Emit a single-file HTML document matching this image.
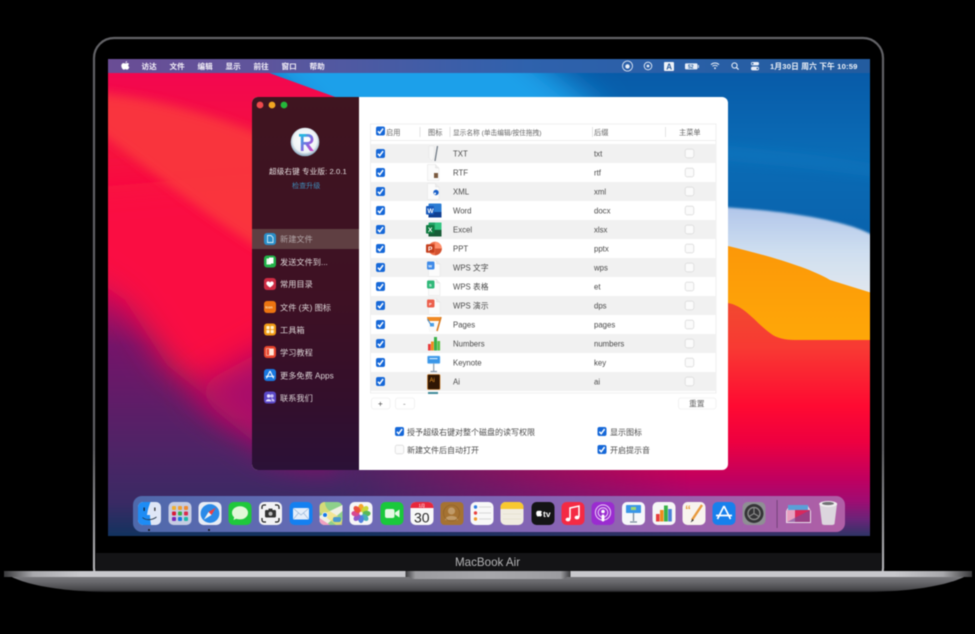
<!DOCTYPE html>
<html><head><meta charset="utf-8"><title>MacBook Air</title>
<style>
html,body{margin:0;padding:0;background:#000;width:975px;height:634px;overflow:hidden}
svg{display:block;filter:blur(.4px)}
text{font-family:"Liberation Sans","Noto Sans CJK SC",sans-serif}
.m{font-size:7.6px;fill:#f4f0f8;font-weight:700}
.s{font-size:8.2px;fill:#dcd4d6}
.h{font-size:7.2px;fill:#666}
.r{font-size:7.8px;fill:#4a4a4a}
.b{font-size:8px;fill:#4c4c4c}
</style></head><body>
<svg width="975" height="634" viewBox="0 0 975 634" xmlns="http://www.w3.org/2000/svg">
<defs>
<linearGradient id="gL" gradientUnits="userSpaceOnUse" x1="0" y1="59" x2="0" y2="536">
<stop offset="0" stop-color="#f20552"/><stop offset=".2" stop-color="#f6123f"/><stop offset=".38" stop-color="#f80a40"/><stop offset=".48" stop-color="#c80a5a"/><stop offset=".6" stop-color="#74146a"/><stop offset=".82" stop-color="#4e2466"/><stop offset=".93" stop-color="#3a2a64"/><stop offset="1" stop-color="#12335f"/>
</linearGradient>
<linearGradient id="gBlue" x1="0" y1="0" x2="0" y2="1">
<stop offset="0" stop-color="#0758a6"/><stop offset=".45" stop-color="#0b6cb6"/><stop offset=".7" stop-color="#0a66b0"/><stop offset="1" stop-color="#0860aa"/>
</linearGradient>
<linearGradient id="gWhite" x1="0" y1="0" x2="0" y2="1">
<stop offset="0" stop-color="#a9bfe8"/><stop offset=".55" stop-color="#cfdff0"/><stop offset="1" stop-color="#e4e8ee"/>
</linearGradient>
<linearGradient id="gOr" x1="0" y1="0" x2="0" y2="1">
<stop offset="0" stop-color="#fb9208"/><stop offset="1" stop-color="#ffa908"/>
</linearGradient>
<linearGradient id="gRed" gradientUnits="userSpaceOnUse" x1="0" y1="300" x2="0" y2="536">
<stop offset="0" stop-color="#f14a30"/><stop offset=".2" stop-color="#f83a33"/><stop offset=".45" stop-color="#ff0a32"/><stop offset=".6" stop-color="#ee0040"/><stop offset=".76" stop-color="#c00060"/><stop offset=".85" stop-color="#a00c72"/><stop offset=".93" stop-color="#6a2478"/><stop offset="1" stop-color="#2e3465"/>
</linearGradient>
<linearGradient id="gFade" gradientUnits="userSpaceOnUse" x1="340" y1="0" x2="690" y2="0">
<stop offset="0" stop-color="#fff"/><stop offset="1" stop-color="#000"/>
</linearGradient>
<mask id="mFade" maskUnits="userSpaceOnUse" x="0" y="0" width="975" height="634"><rect x="0" y="0" width="975" height="634" fill="url(#gFade)"/></mask>
<linearGradient id="gDock" x1="0" y1="0" x2="1" y2="0">
<stop offset="0" stop-color="#4f69ab"/><stop offset=".3" stop-color="#6a6bb6"/><stop offset=".6" stop-color="#8864b4"/><stop offset="1" stop-color="#b05fa6"/>
</linearGradient>
<linearGradient id="gMenu" x1="0" y1="0" x2="1" y2="0">
<stop offset="0" stop-color="#6a4d95"/><stop offset=".2" stop-color="#5f559c"/><stop offset=".55" stop-color="#2f62ad"/><stop offset="1" stop-color="#235c9f"/>
</linearGradient>
<linearGradient id="gSide" x1="0" y1="0" x2="0" y2="1">
<stop offset="0" stop-color="#3f1520"/><stop offset=".55" stop-color="#3e1124"/><stop offset=".8" stop-color="#340f2b"/><stop offset="1" stop-color="#2b1137"/>
</linearGradient>
<linearGradient id="gBase" x1="0" y1="0" x2="0" y2="1">
<stop offset="0" stop-color="#8c8c90"/><stop offset=".55" stop-color="#66666a"/><stop offset=".9" stop-color="#454548"/><stop offset="1" stop-color="#1c1c1e"/>
</linearGradient>
<linearGradient id="gStrip" x1="0" y1="0" x2="1" y2="0">
<stop offset="0" stop-color="#3a3a3c"/><stop offset=".03" stop-color="#a8a8ac"/><stop offset=".08" stop-color="#c8c8cc"/><stop offset=".92" stop-color="#c8c8cc"/><stop offset=".97" stop-color="#a8a8ac"/><stop offset="1" stop-color="#3a3a3c"/>
</linearGradient>
<linearGradient id="gNotch" x1="0" y1="0" x2="1" y2="0">
<stop offset="0" stop-color="#3c3c3e"/><stop offset=".06" stop-color="#9c9ca0"/><stop offset=".5" stop-color="#a8a8ac"/><stop offset=".94" stop-color="#9c9ca0"/><stop offset="1" stop-color="#3c3c3e"/>
</linearGradient>
<linearGradient id="gBez" x1="0" y1="0" x2="0" y2="1">
<stop offset="0" stop-color="#626266"/><stop offset=".75" stop-color="#626266"/><stop offset="1" stop-color="#c0c0c4"/>
</linearGradient>
<radialGradient id="gLogo" cx=".5" cy=".45" r=".55"><stop offset="0" stop-color="#fff"/><stop offset=".75" stop-color="#eef3f6"/><stop offset="1" stop-color="#7fa0b8"/></radialGradient>
<linearGradient id="gR" x1="0" y1="0" x2="1" y2="1"><stop offset="0" stop-color="#28b5e0"/><stop offset=".55" stop-color="#8068e0"/><stop offset="1" stop-color="#d840c0"/></linearGradient>
<filter id="b1" filterUnits="userSpaceOnUse" x="0" y="0" width="975" height="634"><feGaussianBlur stdDeviation="1"/></filter>
<filter id="b4" filterUnits="userSpaceOnUse" x="0" y="0" width="975" height="634"><feGaussianBlur stdDeviation="5"/></filter>
<filter id="b15" filterUnits="userSpaceOnUse" x="0" y="0" width="975" height="634"><feGaussianBlur stdDeviation="16"/></filter>
<clipPath id="scr"><rect x="108" y="59" width="762" height="477"/></clipPath>
<g id="on"><rect x="-4.5" y="-4.5" width="9" height="9" rx="2" fill="#1668d8"/><path d="M-2.6,.2 L-.8,2.2 L2.6,-2.4" fill="none" stroke="#fff" stroke-width="1.5"/></g>
<g id="off"><rect x="-4.3" y="-4.3" width="8.6" height="8.6" rx="2" fill="#fbfbfb" stroke="#dcdcdc" stroke-width=".8"/></g>
<g id="doc"><path d="M-5.5,-8 H2.5 L6,-4.5 V8 H-5.5 Z" fill="#fbfbfb" stroke="#e2e2e2" stroke-width=".5"/><path d="M2.5,-8 V-4.5 H6" fill="#ececec" stroke="#dadada" stroke-width=".4"/></g>
</defs>

<!-- laptop lid -->
<rect x="94" y="38" width="789" height="550" rx="20" fill="#000" stroke="url(#gBez)" stroke-width="2.2"/>
<rect x="96" y="553" width="785" height="18" fill="#141416"/>

<!-- wallpaper -->
<g clip-path="url(#scr)">
<rect x="108" y="59" width="762" height="477" fill="#0860aa"/>
<rect x="440" y="59" width="430" height="210" fill="url(#gBlue)"/>
<path d="M220,30 L500,30 L600,110 L600,200 L400,200 Z" fill="#1aa0ea" filter="url(#b15)"/>
<path d="M620,135 C700,145 800,150 880,165 L880,178 C800,165 700,160 620,150 Z" fill="#1078c0" opacity=".5" filter="url(#b4)"/>
<path d="M500,195 C600,198 728,207 760,210 C800,214 850,222 872,235 L872,300 L500,300 Z" fill="url(#gWhite)" filter="url(#b1)"/>
<path d="M500,210 C600,225 700,240 728,246 C770,256 810,268 830,280 L872,293 L872,350 L500,350 Z" fill="url(#gOr)"/>
<path d="M100,300 L728,303 C745,306 755,322 770,333 C776,338 785,340 795,340 L872,340 L872,540 L100,540 Z" fill="url(#gRed)"/>
<g mask="url(#mFade)">
<path d="M231,59 L371,110 L700,110 L700,540 L100,540 L100,59 Z" fill="url(#gL)"/>
</g>
<g clip-path="url(#scr)">
<path d="M60,190 L300,170 L320,430 L233,418 L167,365 L125,300 L60,255 Z" fill="#fa0a42" filter="url(#b15)"/>
<path d="M190,390 L300,330 L340,470 L270,455 Z" fill="#a8086a" filter="url(#b15)"/>
<path d="M90,92 C150,97 205,112 262,135 L262,250 C205,215 150,170 90,125 Z" fill="#fa3a3c" opacity=".85" filter="url(#b4)"/>
</g>
</g>

<!-- menubar -->
<rect x="108" y="59" width="762" height="14" fill="url(#gMenu)"/>
<g transform="translate(125.2,65.5) scale(1.25) translate(-125.3,-65)">
<path d="M125.4,62.8 C125.6,62 126.2,61.6 126.8,61.5 C126.9,62.3 126.2,63 125.4,62.8 Z M125.3,63.4 C126,63.4 126.3,63 127,63 C127.6,63 128.1,63.3 128.4,63.8 C127.4,64.4 127.6,65.9 128.6,66.3 C128.3,67.2 127.6,68.3 126.9,68.3 C126.3,68.3 126.1,68 125.5,68 C124.9,68 124.7,68.3 124.1,68.3 C123.2,68.3 122.2,66.5 122.2,65.2 C122.2,63.9 123.1,63.1 124,63.1 C124.6,63.1 124.9,63.4 125.3,63.4 Z" fill="#fff"/>
</g>
<text class="m" x="141.5" y="69">访达</text><text class="m" x="169.5" y="69">文件</text><text class="m" x="197.5" y="69">编辑</text><text class="m" x="225.5" y="69">显示</text><text class="m" x="253.5" y="69">前往</text><text class="m" x="281.5" y="69">窗口</text><text class="m" x="309.5" y="69">帮助</text>
<g fill="none" stroke="#e8eef8">
<circle cx="627.5" cy="66" r="5" stroke-width=".8"/><circle cx="627.5" cy="66.4" r="2.2" fill="#e8eef8" stroke="none"/>
<circle cx="648" cy="66" r="3.8" stroke-width=".9"/><circle cx="648" cy="66" r="1.4" fill="#e8eef8" stroke="none"/>
<path d="M711,64.6 C713.2,62.5 716.8,62.5 719,64.6 M712.5,66.3 C714,65 716,65 717.5,66.3" stroke-width="1"/>
<circle cx="734.5" cy="65.5" r="2.6" stroke-width="1"/><path d="M736.4,67.4 L738.6,69.6" stroke-width="1.2"/>
</g>
<circle cx="715" cy="68.2" r=".9" fill="#e8eef8"/>
<rect x="664" y="62" width="10" height="9" rx="1" fill="#eef2f8"/><text x="666.2" y="69.6" style="font-size:8px;font-weight:700;fill:#2b5c9c">A</text>
<rect x="685" y="63.4" width="12.5" height="6" rx="1" fill="#e8eef8"/><rect x="698" y="65" width="1" height="3" fill="#c8d4e6"/><text x="688" y="68.6" style="font-size:5px;font-weight:700;fill:#1f5a9c">52</text>
<rect x="751" y="62" width="8" height="3.4" rx="1.6" fill="#e8eef8"/><rect x="751" y="66.6" width="8" height="3.8" rx="1.8" fill="#e8eef8"/><circle cx="752.6" cy="63.7" r=".9" fill="#235c9f"/><circle cx="757.4" cy="68.5" r=".9" fill="#235c9f"/>
<text x="770" y="69" style="font-size:7.7px;font-weight:700;fill:#eef2f8;letter-spacing:.15px">1月30日 周六 下午 10:59</text>

<!-- window -->
<rect x="252" y="97" width="476" height="373" rx="6" fill="#fff"/>
<path d="M359,97 H258 a6,6 0 0 0 -6,6 V464 a6,6 0 0 0 6,6 H359 Z" fill="url(#gSide)"/>
<circle cx="260" cy="105" r="3.4" fill="#ee4a4c"/><circle cx="272" cy="105" r="3.4" fill="#f2a622"/><circle cx="284" cy="105" r="3.4" fill="#25b83a"/>
<circle cx="305" cy="142" r="14.3" fill="url(#gLogo)"/>
<path d="M301,134 H307.6 C312,134 313.4,137 313.4,139.4 C313.4,142 311.6,144 309,144.4 L313.8,151 H310 L305.5,144.6 H303.6 V151 H300.8 V136.6 H301 Z M303.6,136.8 V142 H307.4 C309.4,142 310.6,141 310.6,139.4 C310.6,137.8 309.4,136.8 307.4,136.8 Z" fill="url(#gR)"/>
<rect x="299" y="134" width="7" height="2.6" fill="#28b5e0"/>
<text x="269" y="174" style="font-size:7.6px;fill:#e6dfe0;letter-spacing:.1px">超级右键 专业版: 2.0.1</text>
<text x="292" y="188" style="font-size:7.1px;fill:#3f8cb8">检查升级</text>

<rect x="252" y="229" width="107" height="20" fill="#5f3f42"/>
<!-- sidebar icons -->
<rect x="264" y="233" width="12" height="12" rx="3" fill="#2a8ec8"/><path d="M267.5,235.5 H271 L273,237.5 V242.5 H267.5 Z" fill="none" stroke="#d5eef8" stroke-width=".9"/>
<rect x="264" y="255.5" width="12" height="12" rx="3" fill="#23b24a"/><path d="M266.5,258.5 H271 V264.5 H266.5 Z" fill="#e8f8e8"/><path d="M269,257.5 H273.5 V263.5 H269 Z" fill="#fff"/>
<rect x="264" y="278" width="12" height="12" rx="3" fill="#cf2c44"/><path d="M270,287.5 C266.5,285 265.8,283.5 266.6,282.2 C267.5,281 269.2,281.2 270,282.6 C270.8,281.2 272.5,281 273.4,282.2 C274.2,283.5 273.5,285 270,287.5 Z" fill="#fff"/>
<rect x="264" y="301" width="12" height="12" rx="3" fill="#ec7410"/><text x="265.3" y="308.5" style="font-size:3.6px;font-weight:700;fill:#ffe9c8">Icon</text>
<rect x="264" y="323.5" width="12" height="12" rx="3" fill="#f09a14"/><g fill="#fff2cc"><rect x="266.4" y="326" width="3.2" height="3.2" rx=".7"/><rect x="270.6" y="326" width="3.2" height="3.2" rx=".7"/><rect x="266.4" y="330" width="3.2" height="3.2" rx=".7"/><rect x="270.6" y="330" width="3.2" height="3.2" rx=".7"/></g>
<rect x="264" y="346" width="12" height="12" rx="3" fill="#e8442c"/><rect x="266.4" y="348.6" width="7.4" height="6.8" fill="#ffe8d8"/><rect x="266.4" y="348.6" width="3" height="6.8" fill="#e8442c" stroke="#ffe8d8" stroke-width=".5"/>
<rect x="264" y="369" width="12" height="12" rx="3" fill="#1878e0"/><path d="M270,371 L273.6,378.4 M270,371 L266.4,378.4 M265.8,376.4 H274.2" stroke="#fff" stroke-width="1" fill="none"/>
<rect x="264" y="391.5" width="12" height="12" rx="3" fill="#5a48c8"/><circle cx="268.6" cy="396" r="1.7" fill="#e6e0ff"/><circle cx="272" cy="396" r="1.7" fill="#c8c0f4"/><path d="M265.8,401.4 C266,398.4 271,398.4 271.4,401.4 Z" fill="#e6e0ff"/><path d="M271.8,401.4 C272,400 271.6,399 271,398.6 C273,398.2 274.6,399.6 274.6,401.4 Z" fill="#c8c0f4"/>

<text x="280" y="242" class="s" style="fill:#b0a4a6">新建文件</text>
<text x="280" y="265" class="s">发送文件到...</text>
<text x="280" y="287" class="s">常用目录</text>
<text x="280" y="310.5" class="s">文件 (夹) 图标</text>
<text x="280" y="333" class="s">工具箱</text>
<text x="280" y="355.5" class="s">学习教程</text>
<text x="280" y="378.5" class="s">更多免费 Apps</text>
<text x="280" y="401" class="s">联系我们</text>

<!-- table -->
<rect x="370.5" y="124" width="345.5" height="269" fill="#fff" stroke="#ececec" stroke-width=".8"/>
<rect x="371" y="140" width="345" height="1" fill="#eeeeee"/>
<g fill="#f1f1f1">
<rect x="371" y="144" width="345" height="19"/><rect x="371" y="182" width="345" height="19"/><rect x="371" y="220" width="345" height="19"/><rect x="371" y="258" width="345" height="19"/><rect x="371" y="296" width="345" height="19"/><rect x="371" y="334" width="345" height="19"/><rect x="371" y="372" width="345" height="19"/>
</g>
<g stroke="#dedede" stroke-width=".8"><path d="M420,127 V137 M450,127 V137 M592.5,127 V137 M665.5,127 V137"/></g>
<use href="#on" x="380.5" y="131"/>
<text class="h" x="386" y="135">启用</text><text class="h" x="428" y="135">图标</text><text class="h" x="453" y="135" style="font-size:6.7px">显示名称 (单击编辑/按住拖拽)</text><text class="h" x="594" y="135">后缀</text><text class="h" x="679" y="135">主菜单</text>

<use href="#on" x="380.5" y="153.5"/><use href="#on" x="380.5" y="172.5"/><use href="#on" x="380.5" y="191.5"/><use href="#on" x="380.5" y="210.5"/><use href="#on" x="380.5" y="229.5"/><use href="#on" x="380.5" y="248.5"/><use href="#on" x="380.5" y="267.5"/><use href="#on" x="380.5" y="286.5"/><use href="#on" x="380.5" y="305.5"/><use href="#on" x="380.5" y="324.5"/><use href="#on" x="380.5" y="343.5"/><use href="#on" x="380.5" y="362.5"/><use href="#on" x="380.5" y="381.5"/>
<use href="#off" x="689.5" y="153.5"/><use href="#off" x="689.5" y="172.5"/><use href="#off" x="689.5" y="191.5"/><use href="#off" x="689.5" y="210.5"/><use href="#off" x="689.5" y="229.5"/><use href="#off" x="689.5" y="248.5"/><use href="#off" x="689.5" y="267.5"/><use href="#off" x="689.5" y="286.5"/><use href="#off" x="689.5" y="305.5"/><use href="#off" x="689.5" y="324.5"/><use href="#off" x="689.5" y="343.5"/><use href="#off" x="689.5" y="362.5"/><use href="#off" x="689.5" y="381.5"/>

<g class="names">
<text class="r" x="453" y="156.5">TXT</text><text class="r" x="453" y="175.5">RTF</text><text class="r" x="453" y="194.5">XML</text><text class="r" x="453" y="213.5">Word</text><text class="r" x="453" y="232.5">Excel</text><text class="r" x="453" y="251.5">PPT</text><text class="r" x="453" y="270.5">WPS 文字</text><text class="r" x="453" y="289.5">WPS 表格</text><text class="r" x="453" y="308.5">WPS 演示</text><text class="r" x="453" y="327.5">Pages</text><text class="r" x="453" y="346.5">Numbers</text><text class="r" x="453" y="365.5">Keynote</text><text class="r" x="453" y="384.5">Ai</text>
<text class="r" x="594" y="156.5">txt</text><text class="r" x="594" y="175.5">rtf</text><text class="r" x="594" y="194.5">xml</text><text class="r" x="594" y="213.5">docx</text><text class="r" x="594" y="232.5">xlsx</text><text class="r" x="594" y="251.5">pptx</text><text class="r" x="594" y="270.5">wps</text><text class="r" x="594" y="289.5">et</text><text class="r" x="594" y="308.5">dps</text><text class="r" x="594" y="327.5">pages</text><text class="r" x="594" y="346.5">numbers</text><text class="r" x="594" y="365.5">key</text><text class="r" x="594" y="384.5">ai</text>
</g>

<!-- table icons -->
<path d="M429,146 H434 V158 L431.5,160.5 L429,158 Z" fill="#f6f6f6" stroke="#e4e4e4" stroke-width=".5"/>
<path d="M437.5,146 L435,161" stroke="#6a7480" stroke-width="1.2"/>
<use href="#doc" x="433" y="172.5"/><rect x="434" y="173" width="4" height="5" fill="#7a5a40"/>
<use href="#doc" x="433" y="191.5"/><circle cx="436" cy="192.5" r="2.7" fill="#1a60c8"/><circle cx="435" cy="193.5" r="1" fill="#fff"/>
<!-- word -->
<rect x="428.5" y="203.5" width="13" height="14" rx="1" fill="#2b7cd3"/><rect x="428.5" y="212" width="13" height="5.5" fill="#103f91"/><rect x="426" y="206" width="8" height="8.6" rx="1" fill="#185abd"/><text x="427.4" y="213" style="font-size:6.6px;font-weight:700;fill:#fff">W</text>
<!-- excel -->
<rect x="428.5" y="222.5" width="13" height="14" rx="1" fill="#21a366"/><rect x="435" y="222.5" width="6.5" height="7" fill="#33c481"/><rect x="428.5" y="230" width="13" height="6.5" fill="#185c37"/><rect x="426" y="225" width="8.4" height="8.6" rx="1" fill="#107c41"/><text x="428" y="232" style="font-size:6.6px;font-weight:700;fill:#fff">X</text>
<!-- ppt -->
<circle cx="435" cy="248.5" r="6.8" fill="#ed6c47"/><path d="M435,241.7 A6.8,6.8 0 0 1 441.8,248.5 H435 Z" fill="#ff8f6b"/><path d="M435,248.5 H441.8 A6.8,6.8 0 0 1 435,255.3 Z" fill="#d35230"/><rect x="426" y="244.2" width="8.4" height="8.6" rx="1" fill="#c43e1c"/><text x="428" y="251.2" style="font-size:6.6px;font-weight:700;fill:#fff">P</text>
<!-- WPS -->
<use href="#doc" x="434" y="268.5"/><rect x="427" y="261.5" width="7.5" height="8" rx="1.2" fill="#3e8ae8"/><text x="428.2" y="267.4" style="font-size:4px;font-weight:700;fill:#fff">W</text>
<use href="#doc" x="434" y="287.5"/><rect x="427" y="280.5" width="7.5" height="8" rx="1.2" fill="#2fb878"/><text x="429" y="286.4" style="font-size:4px;font-weight:700;fill:#fff">S</text>
<use href="#doc" x="434" y="306.5"/><rect x="427" y="299.5" width="7.5" height="8" rx="1.2" fill="#ec5f4c"/><text x="429" y="305.4" style="font-size:4px;font-weight:700;fill:#fff">P</text>
<!-- Pages -->
<path d="M427,317 H440 L438,332 H429 Z" fill="#fafafa"/><path d="M427,317 H440 L439.4,321 H427.6 Z" fill="#f08a24"/><rect x="430" y="323" width="4" height="3.5" fill="#4aa0e8"/><path d="M441,317 L437,331" stroke="#d87a20" stroke-width="1.6"/><path d="M427.5,319 L431,325" stroke="#3a8ad0" stroke-width="1"/>
<!-- Numbers -->
<rect x="428" y="344" width="2.8" height="6.5" fill="#e83c3c"/><rect x="431" y="341.5" width="2.8" height="9" fill="#f08a1c"/><rect x="434" y="337" width="3" height="13.5" fill="#38b048"/><rect x="437.3" y="341" width="2.8" height="9.5" fill="#5cc04a"/>
<!-- Keynote -->
<rect x="427.5" y="356" width="12.5" height="7.5" rx=".8" fill="#3a96e8" stroke="#88c4f4" stroke-width=".5"/><rect x="429.5" y="358" width="8" height="1.2" fill="#d0e8fb"/><path d="M433.7,363.5 V371 M430.5,371.5 H437" stroke="#8a9cae" stroke-width="1.2" fill="none"/>
<!-- AI -->
<rect x="427.5" y="374.5" width="12.5" height="15" rx="1" fill="#2f1604" stroke="#d87a14" stroke-width=".6"/><text x="429.5" y="382" style="font-size:6px;fill:#f09a2a">Ai</text>
<rect x="428" y="392" width="10" height="2" fill="#3f8a98"/>

<!-- buttons -->
<g fill="#fff" stroke="#efefef" stroke-width=".8"><rect x="371.5" y="398" width="18.5" height="11" rx="2.5"/><rect x="395.5" y="398" width="19" height="11" rx="2.5"/><rect x="678.5" y="398" width="37.5" height="11" rx="2.5"/></g>
<text x="378" y="406.5" style="font-size:8px;fill:#444">+</text><text x="403" y="406.5" style="font-size:8px;fill:#888">-</text>
<text class="h" x="689" y="406.5" style="font-size:7.8px">重置</text>

<use href="#on" x="399.5" y="431.5"/><use href="#off" x="399.5" y="449.5"/><use href="#on" x="602" y="431.5"/><use href="#on" x="602" y="449.5"/>
<text class="b" x="407" y="435">授予超级右键对整个磁盘的读写权限</text>
<text class="b" x="407" y="453">新建文件后自动打开</text>
<text class="b" x="610" y="435">显示图标</text>
<text class="b" x="610" y="453">开启提示音</text>

<!-- dock -->
<rect x="133" y="496" width="712" height="36" rx="9" fill="url(#gDock)"/>
<circle cx="149" cy="530" r="1" fill="#111"/><circle cx="209" cy="530" r="1" fill="#111"/>
<rect x="776.7" y="500" width=".8" height="28" fill="#6a3a70"/>

<!-- finder -->
<rect x="138" y="502" width="23" height="23" rx="5" fill="#dfe6f6"/><path d="M143,502 H150.5 C148.5,507 147.5,511 147,515 H150 C150,518 150.5,522 151,525 H143 A5,5 0 0 1 138,520 V507 A5,5 0 0 1 143,502 Z" fill="#1e8cf4"/><rect x="143.5" y="507.5" width="1.3" height="3.4" fill="#123"/><rect x="154.2" y="507.5" width="1.3" height="3.4" fill="#333"/><path d="M142.5,517.5 C146,520.5 152,520.5 156.5,517" fill="none" stroke="#234" stroke-width=".8"/>
<!-- launchpad -->
<rect x="168.5" y="502" width="23" height="23" rx="5" fill="#c6cce2"/>
<g>
<rect x="172" y="506" width="4" height="4" rx="1" fill="#f0b030"/><rect x="178" y="506" width="4" height="4" rx="1" fill="#f0a030"/><rect x="184" y="506" width="4" height="4" rx="1" fill="#f08a30"/>
<rect x="172" y="511.5" width="4" height="4" rx="1" fill="#d81c38"/><rect x="178" y="511.5" width="4" height="4" rx="1" fill="#38b048"/><rect x="184" y="511.5" width="4" height="4" rx="1" fill="#d82c4c"/>
<rect x="172" y="517" width="4" height="4" rx="1" fill="#7a28b8"/><rect x="178" y="517" width="4" height="4" rx="1" fill="#1878e0"/><rect x="184" y="517" width="4" height="4" rx="1" fill="#20b8a8"/>
</g>
<!-- safari -->
<rect x="198.5" y="502" width="23" height="23" rx="5" fill="#e8ecf4"/><circle cx="210" cy="513.5" r="9.4" fill="#2a8ae8"/><path d="M216,507.5 L208.5,512 L211.5,515 Z" fill="#f04040"/><path d="M204,519.5 L208.5,512 L211.5,515 Z" fill="#f4f4f4"/>
<!-- messages -->
<rect x="228.5" y="502" width="23" height="23" rx="5" fill="#1fc83c"/><ellipse cx="240" cy="512.8" rx="8" ry="6.6" fill="#e2f8d8"/><path d="M234.5,516 L233.5,520 L238,518 Z" fill="#e2f8d8"/>
<!-- screenshot -->
<rect x="259" y="502" width="23" height="23" rx="5" fill="#f2f2f4"/><path d="M262,509 V507 A2,2 0 0 1 264,505 H266 M275,505 H277 A2,2 0 0 1 279,507 V509 M279,518 V520 A2,2 0 0 1 277,522 H275 M266,522 H264 A2,2 0 0 1 262,520 V518" fill="none" stroke="#222" stroke-width="1.3"/><rect x="265" y="510" width="11" height="7.5" rx="1.2" fill="#333"/><rect x="268.5" y="508.6" width="4" height="2" fill="#333"/><circle cx="270.5" cy="513.7" r="2" fill="#bbb"/>
<!-- mail -->
<rect x="289.5" y="502" width="23" height="23" rx="5" fill="#1480f0"/><rect x="293" y="508" width="16" height="11.5" rx="1" fill="#e4eefa"/><path d="M293.5,508.5 L301,515 L308.5,508.5 M293.5,519 L298.5,513 M308.5,519 L303.5,513" fill="none" stroke="#9ab8d8" stroke-width=".7"/>
<!-- maps -->
<rect x="319.5" y="502" width="23" height="23" rx="5" fill="#8ed08a"/><path d="M319.5,516 L342.5,505 V511 L326,525 H324.5 A5,5 0 0 1 319.5,520 Z" fill="#f0f0e4"/><path d="M325,502 C325,512 335,512 342,520 V525 H336 C328,518 322,515 319.5,512 V507 A5,5 0 0 1 325,502 Z" fill="#f4e070" opacity=".7"/><path d="M319.5,518 L330,525 H324.5 A5,5 0 0 1 319.5,520 Z" fill="#f0a0c0"/><circle cx="325" cy="515" r="2.4" fill="#1878e8" stroke="#fff" stroke-width=".7"/><rect x="333" y="517" width="8" height="5" rx="2" fill="#4a9ad0"/>
<!-- photos -->
<rect x="349.5" y="502" width="23" height="23" rx="5" fill="#f6f6f6"/>
<g transform="translate(361,513.5)">
<ellipse cx="0" cy="-5.6" rx="2.8" ry="4" fill="#f4a82c"/><ellipse cx="4" cy="-4" rx="2.8" ry="4" fill="#c8d83c" transform="rotate(45 4 -4)"/><ellipse cx="5.6" cy="0" rx="4" ry="2.8" fill="#58b858"/><ellipse cx="4" cy="4" rx="2.8" ry="4" fill="#48b0b8" transform="rotate(-45 4 4)"/><ellipse cx="0" cy="5.6" rx="2.8" ry="4" fill="#5080e0"/><ellipse cx="-4" cy="4" rx="2.8" ry="4" fill="#9058c8" transform="rotate(45 -4 4)"/><ellipse cx="-5.6" cy="0" rx="4" ry="2.8" fill="#d84890"/><ellipse cx="-4" cy="-4" rx="2.8" ry="4" fill="#ec5040" transform="rotate(-45 -4 -4)"/>
</g>
<!-- facetime -->
<rect x="380.5" y="502" width="23" height="23" rx="5" fill="#1ac83c"/><rect x="385" y="509" width="9.5" height="9" rx="2" fill="#e4f8e4"/><path d="M395,512.5 L399.5,509.5 V517.5 L395,514.5 Z" fill="#e4f8e4"/>
<!-- calendar -->
<rect x="410.5" y="502" width="23" height="23" rx="5" fill="#f8f8f8"/><path d="M415.5,502 H428.5 A5,5 0 0 1 433.5,507 V508 H410.5 V507 A5,5 0 0 1 415.5,502 Z" fill="#e8283c"/><text x="418.6" y="506.8" style="font-size:4.2px;fill:#fff">1月</text><text x="414" y="522.5" style="font-size:14px;fill:#2a2a2a">30</text>
<!-- contacts -->
<rect x="440.5" y="502" width="23" height="23" rx="4" fill="#a57232"/><circle cx="451.5" cy="511" r="3.6" fill="#c09a68"/><path d="M445,520 C445.5,514.5 457.5,514.5 458,520 Z" fill="#c09a68"/><circle cx="451.5" cy="513" r="8" fill="none" stroke="#8a5e28" stroke-width=".6"/>
<!-- reminders -->
<rect x="470.5" y="502" width="23" height="23" rx="5" fill="#f8f8f8"/><circle cx="475.5" cy="507" r="1.7" fill="#2a7ae0"/><circle cx="475.5" cy="513" r="1.7" fill="#e84040"/><circle cx="475.5" cy="519" r="1.7" fill="#f09a2c"/><path d="M479,507 H491 M479,513 H491 M479,519 H491" stroke="#ccc" stroke-width=".7"/>
<!-- notes -->
<rect x="500.5" y="502" width="23" height="23" rx="5" fill="#f0ece0"/><path d="M505.5,502 H518.5 A5,5 0 0 1 523.5,507 V509 H500.5 V507 A5,5 0 0 1 505.5,502 Z" fill="#f8c830"/><path d="M503,514 H521 M503,519 H521" stroke="#ded8c8" stroke-width=".5"/>
<!-- tv -->
<rect x="531.5" y="502" width="23" height="23" rx="5" fill="#141416"/><path d="M538.5,510.8 C537.4,510.8 536.2,511.4 536.2,513.4 C536.2,515 537.2,516.6 538,516.6 C538.5,516.6 538.7,516.3 539.2,516.3 C539.7,516.3 539.9,516.6 540.4,516.6 C541.1,516.6 541.8,515.4 542,514.6 C541,514.1 541,512.4 542,511.8 C541.5,511 540.6,510.8 540,510.8 C539.4,510.8 539,511 538.5,510.8 Z" fill="#fff"/><text x="543" y="517" style="font-size:8.5px;font-weight:700;fill:#fff">tv</text>
<!-- music -->
<rect x="561.5" y="502" width="23" height="23" rx="5" fill="#f42a44"/><path d="M570,519 V508 L579,506 V517" fill="none" stroke="#fff" stroke-width="1.5"/><ellipse cx="568" cy="519.5" rx="2.4" ry="1.9" fill="#fff"/><ellipse cx="577" cy="517.5" rx="2.4" ry="1.9" fill="#fff"/>
<!-- podcasts -->
<rect x="591.5" y="502" width="23" height="23" rx="5" fill="#9a2cd0"/><circle cx="603" cy="512.5" r="7.6" fill="none" stroke="#ecd0f8" stroke-width="1"/><circle cx="603" cy="512.5" r="4.8" fill="none" stroke="#ecd0f8" stroke-width="1"/><circle cx="603" cy="511.5" r="1.8" fill="#fff"/><rect x="601.6" y="514.5" width="2.8" height="7" rx="1.2" fill="#fff"/>
<!-- keynote -->
<rect x="622" y="502" width="23" height="23" rx="5" fill="#f6f8fa"/><rect x="626" y="505" width="15" height="8" rx=".8" fill="#3a96e8"/><rect x="631" y="507" width="5" height="3" fill="#a0d870"/><path d="M633.5,513 V521 M630,522 H637" stroke="#7a8a9c" stroke-width="1.3"/>
<!-- numbers -->
<rect x="652.5" y="502" width="23" height="23" rx="5" fill="#f6f6f6"/><rect x="656" y="514" width="3.6" height="7.5" fill="#e83c3c"/><rect x="660" y="510" width="3.6" height="11.5" fill="#f08a1c"/><rect x="664" y="505.5" width="3.8" height="16" fill="#38b048"/><rect x="668.2" y="509" width="3.6" height="12.5" fill="#4a80d8"/>
<!-- pages -->
<rect x="682.5" y="502" width="23" height="23" rx="5" fill="#f8f4ee"/><path d="M702,505 L692,520" stroke="#e89a3c" stroke-width="2.4"/><path d="M692.5,518.8 L690.5,522.5 L693.8,520.4 Z" fill="#333"/><text x="685" y="514" style="font-size:12px;font-weight:700;fill:#e8a040">“</text>
<!-- app store -->
<rect x="712.5" y="502" width="23" height="23" rx="5" fill="#1880ec"/><path d="M724,506 L730.5,519 M724,506 L717.5,519 M716,515.5 H732" stroke="#fff" stroke-width="1.7" fill="none"/>
<!-- sys prefs -->
<rect x="742.5" y="502" width="23" height="23" rx="5" fill="#8f8f94"/><circle cx="754" cy="513.5" r="9.5" fill="#343436"/><circle cx="754" cy="513.5" r="6" fill="none" stroke="#888" stroke-width="1.4"/><path d="M754,507.5 V513.5 L759,516.5 M754,513.5 L749,516.5" stroke="#888" stroke-width="1.2" fill="none"/>
<!-- stack -->
<path d="M789,506 H808 L811,511 V523 H786 V511 Z" fill="#e8dce8"/><rect x="788" y="505" width="20" height="6" fill="#5aa0d8"/><rect x="787" y="510" width="23" height="12" fill="#d8285c"/><rect x="787" y="510" width="8" height="12" fill="#e8a0c0"/><path d="M787,522 L810,510 V522 Z" fill="#7050a0" opacity=".6"/>
<!-- trash -->
<path d="M819.5,504 H837 L834.5,524 A3,2 0 0 1 832,525 H824.5 A3,2 0 0 1 822,524 Z" fill="#dcd6de"/><ellipse cx="828.2" cy="504" rx="9" ry="3" fill="#f0eef0"/><ellipse cx="828" cy="503.5" rx="6" ry="1.6" fill="#707074"/>

<!-- base -->
<text x="455" y="566" style="font-size:11.6px;fill:#b4b4b6">MacBook Air</text>
<path d="M4,571 H972 C966,580 930,591 870,592 H105 C45,591 10,580 4,571 Z" fill="url(#gBase)"/>
<rect x="4" y="571" width="968" height="6" fill="url(#gStrip)"/>
<path d="M405.5,571 H570.5 V577 H567 C566,578 564,579 561,579 H415 C412,579 410,578 409,577 H405.5 Z" fill="url(#gNotch)"/>
</svg>
</body></html>
